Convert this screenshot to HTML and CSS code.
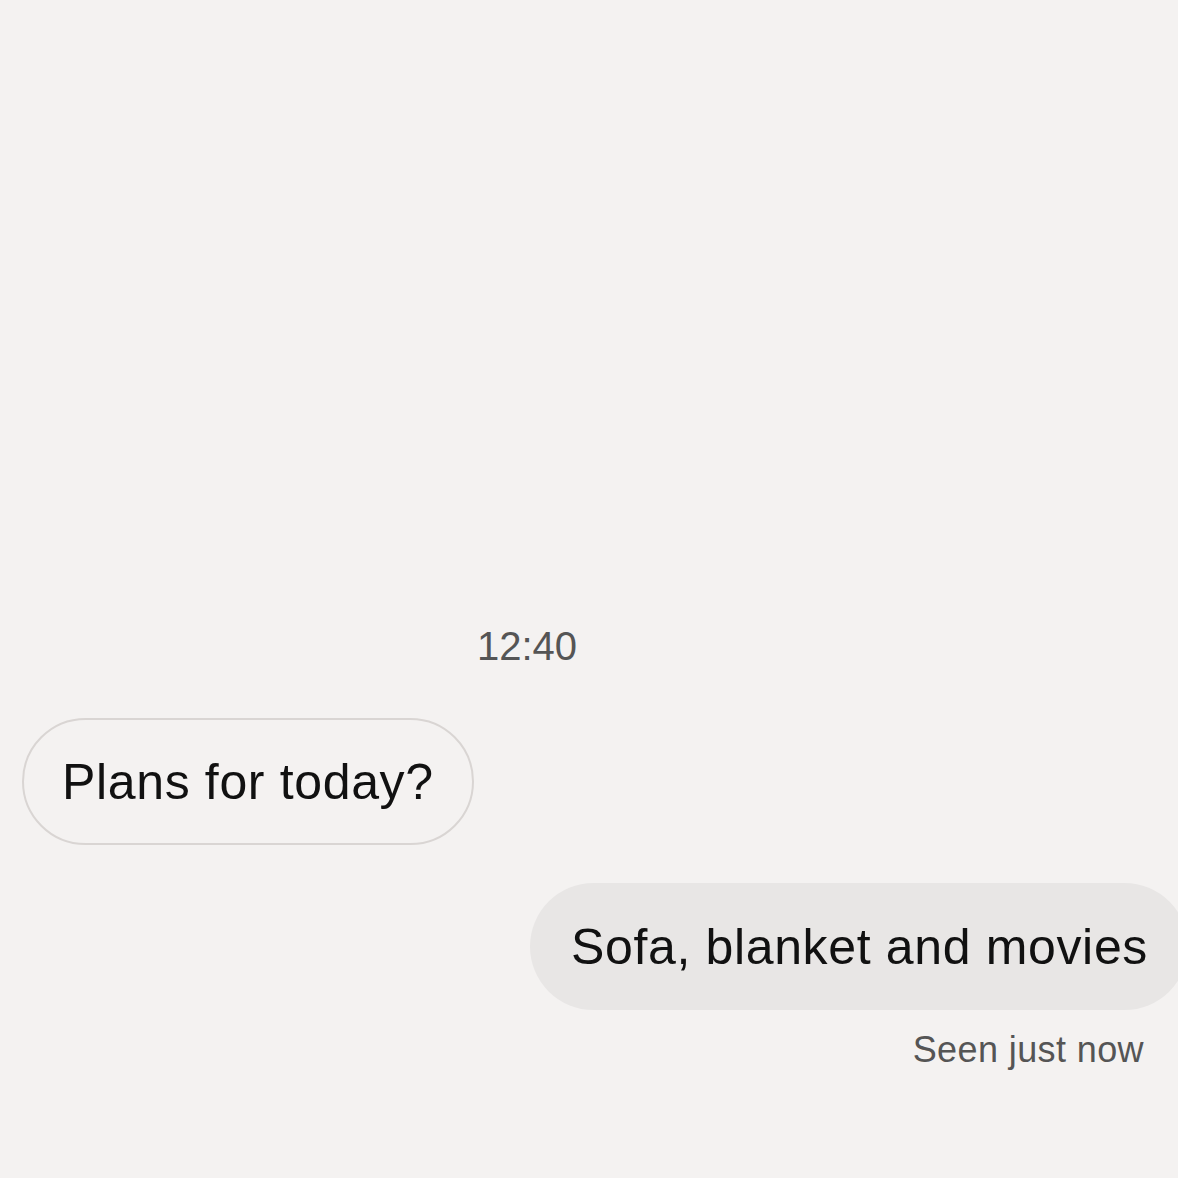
FILE: index.html
```html
<!DOCTYPE html>
<html lang="en">
<head>
    <meta charset="UTF-8">
    <meta name="viewport" content="width=device-width, initial-scale=1.0">
    <title>Chat</title>
    <link rel="stylesheet" href="styles.css">
</head>
<body>
    <div class="thread">
        <div class="time">12:40</div>

        <div class="row incoming">
            <div class="bubble">Plans for today?</div>
        </div>

        <div class="row outgoing">
            <div class="bubble">Sofa, blanket and movies</div>
        </div>

        <div class="seen">Seen just now</div>
    </div>
</body>
</html>
```

FILE: styles.css
```css
html, body {
    margin: 0;
    height: 100%;
}
body {
    font-family: "Liberation Sans", Arial, sans-serif;
    background-color: #f4f2f1;
    color: #111;
    overflow: hidden;
}
.thread {
    display: flex;
    flex-direction: column;
    padding-top: 622px;
}
.time {
    font-size: 40px;
    line-height: 48px;
    color: #555;
    text-align: center;
    padding-right: 124px;
}
.row {
    display: flex;
}
.incoming {
    margin-top: 48px;
    padding-left: 22px;
}
.outgoing {
    margin-top: 38px;
    justify-content: flex-end;
    margin-right: -10px;
}
.bubble {
    display: flex;
    align-items: center;
    height: 127px;
    box-sizing: border-box;
    padding: 0 40px;
    border-radius: 64px;
    font-size: 50px;
    line-height: 60px;
    letter-spacing: 0.65px;
    white-space: nowrap;
}
.incoming .bubble {
    border: 2px solid #d9d5d3;
    padding: 0 38px;
}
.outgoing .bubble {
    background: #e8e6e5;
    padding-left: 41px;
}
.seen {
    margin-top: 18px;
    align-self: flex-end;
    padding-right: 34px;
    font-size: 36px;
    line-height: 44px;
    letter-spacing: 0.4px;
    color: #555;
}
```
